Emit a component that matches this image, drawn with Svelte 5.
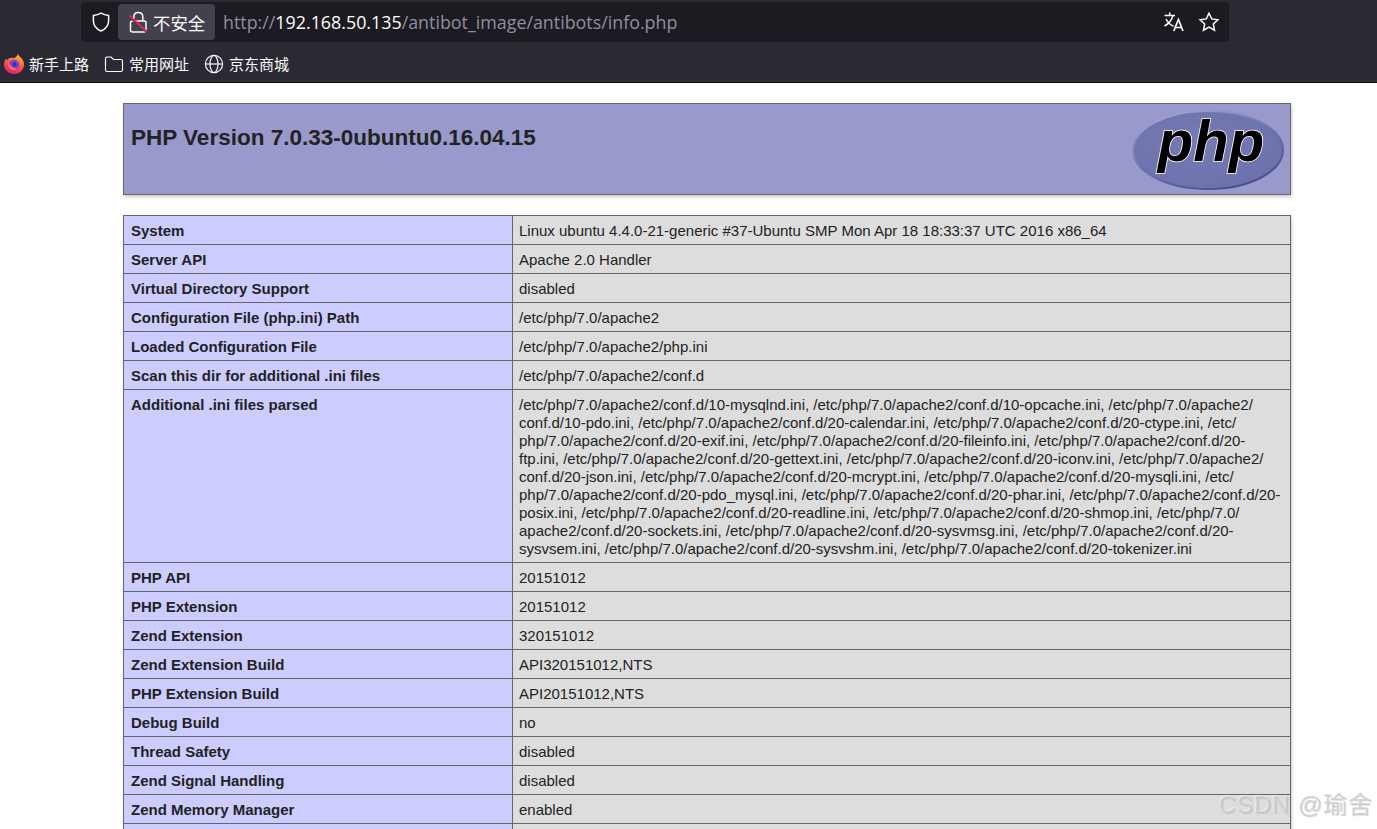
<script>
  const rows = [
    ['System', ['Linux ubuntu 4.4.0-21-generic #37-Ubuntu SMP Mon Apr 18 18:33:37 UTC 2016 x86_64']],
    ['Server API', ['Apache 2.0 Handler']],
    ['Virtual Directory Support', ['disabled']],
    ['Configuration File (php.ini) Path', ['/etc/php/7.0/apache2']],
    ['Loaded Configuration File', ['/etc/php/7.0/apache2/php.ini']],
    ['Scan this dir for additional .ini files', ['/etc/php/7.0/apache2/conf.d']],
    ['Additional .ini files parsed', [
      '/etc/php/7.0/apache2/conf.d/10-mysqlnd.ini, /etc/php/7.0/apache2/conf.d/10-opcache.ini, /etc/php/7.0/apache2/',
      'conf.d/10-pdo.ini, /etc/php/7.0/apache2/conf.d/20-calendar.ini, /etc/php/7.0/apache2/conf.d/20-ctype.ini, /etc/',
      'php/7.0/apache2/conf.d/20-exif.ini, /etc/php/7.0/apache2/conf.d/20-fileinfo.ini, /etc/php/7.0/apache2/conf.d/20-',
      'ftp.ini, /etc/php/7.0/apache2/conf.d/20-gettext.ini, /etc/php/7.0/apache2/conf.d/20-iconv.ini, /etc/php/7.0/apache2/',
      'conf.d/20-json.ini, /etc/php/7.0/apache2/conf.d/20-mcrypt.ini, /etc/php/7.0/apache2/conf.d/20-mysqli.ini, /etc/',
      'php/7.0/apache2/conf.d/20-pdo_mysql.ini, /etc/php/7.0/apache2/conf.d/20-phar.ini, /etc/php/7.0/apache2/conf.d/20-',
      'posix.ini, /etc/php/7.0/apache2/conf.d/20-readline.ini, /etc/php/7.0/apache2/conf.d/20-shmop.ini, /etc/php/7.0/',
      'apache2/conf.d/20-sockets.ini, /etc/php/7.0/apache2/conf.d/20-sysvmsg.ini, /etc/php/7.0/apache2/conf.d/20-',
      'sysvsem.ini, /etc/php/7.0/apache2/conf.d/20-sysvshm.ini, /etc/php/7.0/apache2/conf.d/20-tokenizer.ini'
    ]],
    ['PHP API', ['20151012']],
    ['PHP Extension', ['20151012']],
    ['Zend Extension', ['320151012']],
    ['Zend Extension Build', ['API320151012,NTS']],
    ['PHP Extension Build', ['API20151012,NTS']],
    ['Debug Build', ['no']],
    ['Thread Safety', ['disabled']],
    ['Zend Signal Handling', ['disabled']],
    ['Zend Memory Manager', ['enabled']],
    ['Zend Multibyte Support', ['provided by mbstring']]
  ];
</script>

<div class="browser">
  <header class="toolbar">
    <div class="urlbar">
      <svg class="shield" width="20" height="22" viewBox="0 0 20 22">
        <path d="M10 2.2 C7.5 3.6 5 4.2 2.4 4.4 V10 C2.4 14.6 5.4 18 10 20 C14.6 18 17.6 14.6 17.6 10 V4.4 C15 4.2 12.5 3.6 10 2.2 Z" />
      </svg>
      <div class="insecure">
        <svg width="20" height="22" viewBox="0 0 20 22">
          <path d="M5.8 10 V6 C5.8 3 7.6 1.5 10.3 1.5 C13 1.5 14.8 3 14.8 6 V10 M4.5 10 H16 C17.3 10 18 10.7 18 12 V19 C18 20.3 17.3 21 16 21 H4.5 C3.2 21 2.5 20.3 2.5 19 V12 C2.5 10.7 3.2 10 4.5 10 Z" />
          <path class="slash-gap" d="M1.5 6 L18.5 21" />
          <path class="slash" d="M1.5 4.5 L18.5 20.5" />
        </svg>
        <span>不安全</span>
      </div>
      <div class="url"><span class="dim">http://</span><span class="host">192.168.50.135</span><span class="dim">/antibot_image/antibots/info.php</span></div>
      <svg class="translate" width="22" height="22" viewBox="0 0 22 22">
        <path d="M1.5 4.5 H12 M6.7 1.5 V4.5 M3 8 C5 12 7.5 14 10.5 15.2 M10 4.5 C8.8 9 6 12.6 1.5 15" />
        <path class="heavy" d="M10.8 20 L15.4 8.5 L20 20 M12.4 16.5 H18.4" />
      </svg>
      <svg class="star" width="22" height="22" viewBox="0 0 22 22">
        <path d="M11 2.2 L13.7 7.9 L19.9 8.7 L15.3 13 L16.5 19.2 L11 16.1 L5.5 19.2 L6.7 13 L2.1 8.7 L8.3 7.9 Z" />
      </svg>
    </div>
    <nav class="bookmarks">
      <div class="bookmark">
        <svg width="20" height="22" viewBox="0 0 20 22">
          <defs>
            <linearGradient id="fox" x1="0.7" y1="0" x2="0.3" y2="1">
              <stop offset="0" stop-color="#ffbd2e" />
              <stop offset="0.5" stop-color="#ff5a36" />
              <stop offset="1" stop-color="#e31587" />
            </linearGradient>
          </defs>
          <path fill="url(#fox)" d="M14 .5 C14.5 2.5 15.5 3.5 16.8 4.6 C18.8 6.5 20 9 20 11.5 C20 16.8 15.5 21 10 21 C4.5 21 0 16.8 0 11.5 C0 9 .8 7 2 5.5 L2.8 7.5 C4 5.5 6.5 4.5 9 5 C11 5.2 13.5 3.5 14 .5 Z" />
          <circle cx="10.2" cy="11.8" r="5" fill="#7542e5" />
          <path fill="#ff8a3c" d="M4.6 8.5 C5.5 13 8.5 16 13.5 15.5 C10 18.5 3.5 16.5 4.6 8.5 Z" />
          <circle cx="10.4" cy="11.4" r="2.2" fill="#4d2ba8" />
        </svg>
        <span>新手上路</span>
      </div>
      <div class="bookmark">
        <svg class="line" width="20" height="20" viewBox="0 0 20 20">
          <path d="M1.5 4.5 C1.5 3.5 2 3 3 3 H7 L9.5 5.5 H17 C18 5.5 18.5 6 18.5 7 V16 C18.5 17 18 17.5 17 17.5 H3 C2 17.5 1.5 17 1.5 16 Z" />
        </svg>
        <span>常用网址</span>
      </div>
      <div class="bookmark">
        <svg class="line" width="20" height="20" viewBox="0 0 20 20">
          <circle cx="10" cy="10" r="8.6" />
          <ellipse cx="10" cy="10" rx="4" ry="8.6" />
          <path d="M1.4 10 H18.6" />
        </svg>
        <span>京东商城</span>
      </div>
    </nav>
  </header>

  <main class="page">
    <div class="center">
      <table class="banner">
        <tbody>
          <tr>
            <td>
              <div class="banner-row">
                <h1>PHP Version 7.0.33-0ubuntu0.16.04.15</h1>
                <svg class="logo" width="154" height="82" viewBox="0 0 154 82">
                  <defs>
                    <radialGradient id="oval" cx="0.42" cy="0.4" r="0.65">
                      <stop offset="0" stop-color="#777bb3" />
                      <stop offset="1" stop-color="#6c71ac" />
                    </radialGradient>
                    <linearGradient id="rim" x1="0.2" y1="0" x2="0.8" y2="1">
                      <stop offset="0" stop-color="#a4a7d2" />
                      <stop offset="0.5" stop-color="#6c71ac" />
                      <stop offset="1" stop-color="#45478c" />
                    </linearGradient>
                  </defs>
                  <ellipse cx="77" cy="41" rx="75" ry="39" fill="url(#oval)" stroke="url(#rim)" stroke-width="2" />
                  <text class="logo-text" x="80" y="52" text-anchor="middle">php</text>
                </svg>
              </div>
            </td>
          </tr>
        </tbody>
      </table>

      <table class="info">
        <colgroup>
          <col class="col-e" />
          <col />
        </colgroup>
        <tbody>
          {#each rows as row}
            <tr>
              <td class="e">{row[0]}</td>
              <td class="v">
                {#each row[1] as line}
                  <div class="line-text">{line}</div>
                {/each}
              </td>
            </tr>
          {/each}
        </tbody>
      </table>
    </div>
  </main>

  <div class="watermark">CSDN @瑜舍</div>
</div>

<style>
  :global(body) {
    margin: 0;
    background: #fff;
    overflow: hidden;
  }

  .browser {
    position: relative;
    height: 829px;
    overflow: hidden;
    font-family: "Liberation Sans", Arial, sans-serif;
  }

  .toolbar {
    height: 82px;
    background: #2b2a33;
    border-bottom: 1px solid #0c0c0d;
    display: flex;
    flex-direction: column;
  }

  .urlbar {
    margin: 2px 0 0 81px;
    width: 1148px;
    height: 40px;
    box-sizing: border-box;
    background: #1c1b22;
    border-radius: 4px;
    display: flex;
    align-items: center;
    padding: 0 9px 0 10px;
    color: #fbfbfe;
  }

  .urlbar svg {
    fill: none;
    stroke: #fbfbfe;
    stroke-width: 1.5;
    flex: none;
  }

  .insecure {
    margin-left: 7px;
    width: 97px;
    height: 36px;
    box-sizing: border-box;
    padding-left: 10px;
    background: #42414d;
    border-radius: 4px;
    display: flex;
    align-items: center;
    gap: 5px;
    font: 17.4px "Noto Sans CJK SC", sans-serif;
  }

  .urlbar svg .slash {
    stroke: #e22850;
    stroke-width: 1.8;
  }

  .urlbar svg .slash-gap {
    stroke: #42414d;
    stroke-width: 2;
  }

  .url {
    flex: 1;
    margin-left: 8px;
    font: 17.85px "Open Sans", sans-serif;
    white-space: nowrap;
  }

  .dim {
    color: #8f8f9d;
  }

  .host {
    color: #fbfbfe;
  }

  .translate {
    margin-right: 13px;
  }

  .urlbar svg .heavy {
    stroke-width: 1.7;
  }

  .bookmarks {
    flex: 1;
    display: flex;
    align-items: center;
    padding: 3px 0 0 4px;
    gap: 15px;
    color: #fbfbfe;
    font: 15px "Noto Sans CJK SC", sans-serif;
  }

  .bookmark {
    display: flex;
    align-items: center;
    gap: 5px;
  }

  .bookmark .line {
    fill: none;
    stroke: #fbfbfe;
    stroke-width: 1.2;
  }

  .page {
    background: #fff;
    color: #222;
    padding-top: 20px;
  }

  .center {
    width: 1168px;
    margin-left: 123px;
  }

  table {
    border-collapse: collapse;
    width: 1168px;
    box-shadow: 1px 2px 3px #ccc;
  }

  .banner {
    height: 92px;
    margin-bottom: 20px;
  }

  .banner td {
    background: #9999cc;
    border: 1px solid #666;
    padding: 0 5px 0 7px;
  }

  .banner-row {
    display: flex;
    justify-content: space-between;
    align-items: flex-start;
  }

  h1 {
    margin: 17px 0 0;
    font-size: 22.5px;
    line-height: 28px;
    font-weight: bold;
    color: #222;
  }

  .logo {
    margin-top: 2px;
  }

  .logo-text {
    font-family: "Liberation Sans", sans-serif;
    font-size: 58px;
    font-weight: bold;
    font-style: italic;
    fill: #000;
    stroke: #fff;
    stroke-width: 1.6;
    paint-order: stroke;
  }

  .info {
    table-layout: fixed;
  }

  .col-e {
    width: 389px;
  }

  .info td {
    border: 1px solid #666;
    padding: 6px 6px 4px;
    font-size: 15px;
    line-height: 18px;
    vertical-align: baseline;
  }

  .e {
    background: #ccccff;
    font-weight: bold;
    color: #222;
  }

  .info .e {
    padding-left: 7px;
  }

  .v {
    background: #dddddd;
    color: #222;
  }

  .line-text {
    white-space: nowrap;
  }

  .watermark {
    position: absolute;
    right: 4px;
    bottom: 9px;
    font: 24px "Liberation Sans", "Noto Sans CJK SC", sans-serif;
    letter-spacing: 0.9px;
    color: rgba(204, 204, 204, 0.9);
    text-shadow: -1px -1px 0 rgba(255, 255, 255, 0.5), 1px 1px 0 rgba(130, 130, 130, 0.25);
  }
</style>
